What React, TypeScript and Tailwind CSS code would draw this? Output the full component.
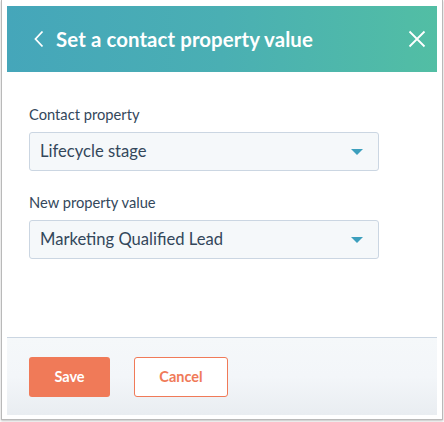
import React from "react";

function Caret() {
  return (
    <svg width="14" height="8" viewBox="0 0 14 8" className="shrink-0">
      <path d="M1 1 H13 L7 7 Z" fill="#3d9fbd" />
    </svg>
  );
}

function Select({ value }: { value: string }) {
  return (
    <div className="w-[350px] h-[39px] rounded-[3px] border border-[#cbd6e2] bg-[#f5f8fa] flex items-center justify-between pl-[10px] pr-[14px]">
      <span className="text-[16.6px] text-[#33475b] leading-none">{value}</span>
      <Caret />
    </div>
  );
}

export default function App() {
  return (
    <div
      className="w-[444px] h-[422px] bg-white relative"
      style={{ fontFamily: "Lato, 'Open Sans', sans-serif" }}
    >
      <div className="w-[442px] h-[420px] ml-[1px] border-x border-b border-[#b9b9b9] bg-white pt-[6px] px-[5px] pb-[4px] flex flex-col shadow-[0_1px_2px_rgba(0,0,0,0.25)]">
        <div className="h-[66px] bg-gradient-to-r from-[#45a6ba] via-[#4aafb3] to-[#52bea4] flex items-center px-[26px] text-white">
          <svg width="12" height="18" viewBox="0 0 12 18" className="mr-[11px] shrink-0">
            <path d="M9.5 1.5 L2.5 9 L9.5 16.5" stroke="white" strokeWidth="1.8" fill="none" />
          </svg>
          <span className="text-[20.4px] font-bold tracking-[0.1px] leading-none">
            Set a contact property value
          </span>
          <svg width="18" height="18" viewBox="0 0 18 18" className="ml-auto mr-[-15px] shrink-0">
            <path d="M1.5 1.5 L16.5 16.5 M16.5 1.5 L1.5 16.5" stroke="white" strokeWidth="1.8" />
          </svg>
        </div>
        <div className="flex-1 flex flex-col px-[22px] pt-[35px]">
          <div className="text-[14.7px] text-[#33475b] leading-none h-[15px] mb-[10px]">Contact property</div>
          <Select value="Lifecycle stage" />
          <div className="text-[14.7px] text-[#33475b] leading-none h-[15px] mt-[24px] mb-[10px]">New property value</div>
          <Select value="Marketing Qualified Lead" />
        </div>
        <div className="h-[78px] border-t border-[#cbd6e2] bg-gradient-to-b from-[#f5f8fa] via-[#f3f6f9] to-[#e9edf1] flex items-center px-[22px] gap-[24px]">
          <button className="w-[81px] h-[40px] rounded-[3px] bg-[#f07a58] text-white text-[14.5px] font-bold">
            Save
          </button>
          <button className="w-[94px] h-[40px] rounded-[3px] border border-[#f07a58] bg-white text-[#f07a58] text-[14.5px] font-bold">
            Cancel
          </button>
        </div>
      </div>
    </div>
  );
}
